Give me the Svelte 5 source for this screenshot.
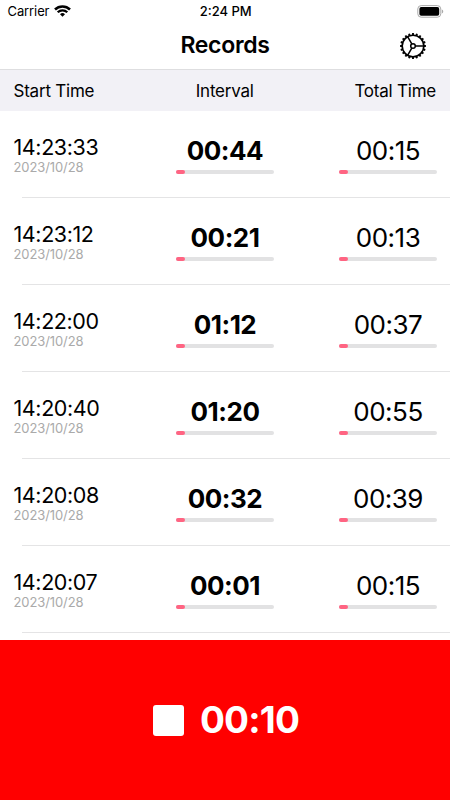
<script>
	const records = [
		{ start: '14:23:33', date: '2023/10/28', interval: '00:44', total: '00:15' },
		{ start: '14:23:12', date: '2023/10/28', interval: '00:21', total: '00:13' },
		{ start: '14:22:00', date: '2023/10/28', interval: '01:12', total: '00:37' },
		{ start: '14:20:40', date: '2023/10/28', interval: '01:20', total: '00:55' },
		{ start: '14:20:08', date: '2023/10/28', interval: '00:32', total: '00:39' },
		{ start: '14:20:07', date: '2023/10/28', interval: '00:01', total: '00:15' }
	];

	// one tooth every 18 degrees
	const teeth = Array.from({ length: 20 }, (_, i) => i * 18);

	let elapsed = '00:10';
</script>

<div class="screen">
	<div class="status">
		<div class="carrier">
			<span>Carrier</span>
			<svg width="17" height="12" viewBox="0 0 17 12" fill="none" stroke="#000">
				<path d="M1 4.5a10.6 10.6 0 0 1 15 0" stroke-width="2.5" />
				<path d="M3.7 7.3a6.8 6.8 0 0 1 9.6 0" stroke-width="2.2" />
				<path d="M8.5 11.7 6 9.3a3.5 3.5 0 0 1 5 0z" fill="#000" stroke="none" />
			</svg>
		</div>
		<span class="clock">2:24 PM</span>
		<svg class="battery" width="27" height="13" viewBox="0 0 27 13">
			<rect x="0.8" y="0.6" width="23" height="11.6" rx="3.4" fill="none" stroke="#aaa" />
			<rect x="2.4" y="2.1" width="19.8" height="8.6" rx="1.8" />
			<path d="M24.9 4.4c1.8.6 1.8 3.4 0 4z" fill="#aaa" />
		</svg>
	</div>

	<header>
		<h1>Records</h1>
		<button aria-label="Settings">
			<svg width="28" height="28" viewBox="-14 -14 28 28" fill="none" stroke="#000">
				<circle r="10.8" stroke-width="1.6" />
				{#each teeth as angle}
					<path d="M0 -11v-1.9" stroke-width="1.9" transform="rotate({angle})" />
				{/each}
				<circle r="2.3" stroke-width="1.5" />
				<path d="M2.4 0h8.2M-1.2 -2.1l-4.2 -7.2M-1.2 2.1l-4.2 7.2" stroke-width="1.5" />
			</svg>
		</button>
	</header>

	<div class="columns">
		<span>Start Time</span>
		<span>Interval</span>
		<span>Total Time</span>
	</div>

	<div class="list">
		{#each records as record}
			<div class="row">
				<div class="start">
					<span class="time">{record.start}</span>
					<span class="date">{record.date}</span>
				</div>
				<div class="cell bold">
					<span>{record.interval}</span>
					<div class="bar"><div class="fill"></div></div>
				</div>
				<div class="cell">
					<span>{record.total}</span>
					<div class="bar"><div class="fill"></div></div>
				</div>
			</div>
		{/each}
	</div>

	<button class="timer">
		<span class="stop"></span>
		<span class="elapsed">{elapsed}</span>
	</button>
</div>

<style>
	.screen {
		display: flex;
		flex-direction: column;
		width: 450px;
		height: 800px;
		overflow: hidden;
		background: #fff;
		color: #000;
		font-family: Inter, sans-serif;
	}

	button {
		padding: 0;
		border: 0;
		background: none;
		font: inherit;
	}

	svg {
		display: block;
	}

	.status {
		display: grid;
		grid-template-columns: 1fr auto 1fr;
		align-items: center;
		height: 22px;
		padding: 0 6px 0 7.5px;
		font-size: 13px;
	}

	.carrier {
		display: flex;
		align-items: center;
		gap: 5px;
		letter-spacing: -0.1px;
	}

	.clock {
		font-weight: 500;
	}

	.battery {
		justify-self: end;
	}

	header {
		display: grid;
		grid-template-columns: 1fr auto 1fr;
		align-items: center;
		height: 47px;
		padding: 0 23px;
		border-bottom: 1px solid #dedee0;
	}

	h1 {
		grid-column: 2;
		margin: 0 0 2px;
		font-size: 23px;
		font-weight: 600;
		letter-spacing: -0.3px;
		line-height: 28px;
	}

	header button {
		justify-self: end;
	}

	.columns {
		display: grid;
		grid-template-columns: 1fr 98px 1fr;
		align-items: center;
		height: 41px;
		padding: 0 14px 0 13.5px;
		background: #f2f1f6;
		font-size: 17px;
		letter-spacing: -0.22px;
	}

	.columns span:nth-child(2) {
		text-align: center;
	}

	.columns span:last-child {
		text-align: right;
	}

	.list {
		flex: 1;
		min-height: 0;
		overflow: hidden;
	}

	/* separator starts slightly inset from the left edge */
	.row {
		display: grid;
		grid-template-columns: 1fr 98px 1fr;
		box-sizing: border-box;
		height: 87px;
		padding: 24px 13px 0;
		background: linear-gradient(#e4e4e5, #e4e4e5) 22px 86px / 100% 1px no-repeat;
	}

	.start {
		display: flex;
		flex-direction: column;
		padding-left: 0.5px;
	}

	.time {
		font-size: 21.5px;
		letter-spacing: -0.4px;
		line-height: 25px;
	}

	.date {
		color: #aaa;
		font-size: 13px;
		letter-spacing: -0.1px;
		line-height: 15px;
	}

	.cell {
		display: flex;
		flex-direction: column;
		align-items: center;
		width: 98px;
		font-size: 26px;
		letter-spacing: -0.5px;
		line-height: 32px;
	}

	.cell:last-child {
		justify-self: end;
	}

	.bold {
		font-weight: 700;
		letter-spacing: -0.5px;
	}

	.bar {
		width: 98px;
		height: 4px;
		margin-top: 3px;
		border-radius: 2px;
		background: #e2e2e3;
	}

	.fill {
		width: 9px;
		height: 4px;
		border-radius: 2px;
		background: #ff6482;
	}

	.timer {
		display: flex;
		align-items: center;
		justify-content: center;
		gap: 16px;
		height: 160px;
		padding-left: 2px;
		background: #f00;
		color: #fff;
		font-size: 37px;
		font-weight: 700;
	}

	.elapsed {
		margin-top: -2px;
		letter-spacing: -0.8px;
	}

	.stop {
		width: 31px;
		height: 31px;
		border-radius: 3px;
		background: #fff;
	}
</style>
